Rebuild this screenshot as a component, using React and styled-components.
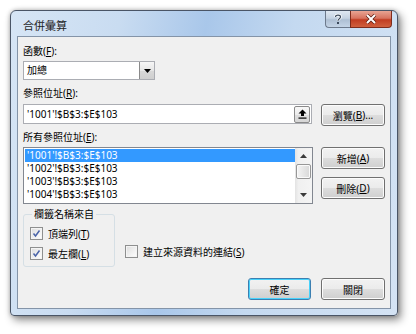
import styled, { createGlobalStyle, css } from "styled-components";

const GlobalStyle = createGlobalStyle`
  html, body {
    margin: 0;
    padding: 0;
    background: #ffffff;
  }
  body {
    font-family: "Noto Sans", "Noto Sans CJK TC", sans-serif;
    font-size: 10px;
    color: #000;
  }
`;

const Page = styled.div`
  padding: 10px 0 0 10px;
  width: 416px;
  height: 334px;
  box-sizing: border-box;
`;

const Window = styled.div`
  width: 388px;
  height: 306px;
  box-sizing: border-box;
  border: 1px solid #4a5566;
  border-radius: 6px 6px 4px 4px;
  background: linear-gradient(
    100deg,
    #d6e5f5 0%,
    #c9dcf1 25%,
    #a9c7ea 45%,
    #c4d9f0 65%,
    #d4e3f4 100%
  );
  box-shadow: 3px 4px 9px rgba(0, 0, 0, 0.45), 0 0 4px rgba(0, 0, 0, 0.25);
  display: flex;
  flex-direction: column;
  padding: 0 6px 6px 6px;
`;

const TitleBar = styled.div`
  height: 25px;
  display: flex;
  align-items: flex-start;
  justify-content: space-between;
`;

const Title = styled.div`
  font-family: "Noto Sans CJK TC", sans-serif;
  font-size: 11px;
  color: #1e1e1e;
  padding: 6px 0 0 6px;
`;

const Controls = styled.div`
  display: flex;
  margin-right: -1px;
`;

const CaptionButton = styled.div`
  height: 16px;
  display: flex;
  align-items: center;
  justify-content: center;
  border: 1px solid #6d7a8c;
  border-top: none;
  ${(p) =>
    p.$close
      ? css`
          width: 40px;
          border-radius: 0 0 4px 0;
          background: linear-gradient(#e8a493 0%, #d7735f 45%, #c13d22 55%, #d0603e 100%);
          border-color: #7e2c1c;
        `
      : css`
          width: 24px;
          border-right: none;
          border-radius: 0 0 0 4px;
          background: linear-gradient(#dfe8f2 0%, #c5d3e2 45%, #aebfd3 55%, #c4d4e6 100%);
        `}
`;

const Client = styled.div`
  flex: 1;
  background: #f0f0f0;
  border: 1px solid #8494a8;
  display: flex;
  flex-direction: column;
  padding: 0 5px;
  font-family: "Noto Sans", "Noto Sans CJK TC", sans-serif;
  font-size: 10px;
`;

const Label = styled.div`
  line-height: 16px;
  margin-top: ${(p) => p.$top}px;
  white-space: nowrap;
`;

const Key = styled.span`
  text-decoration: underline;
`;

const Combo = styled.div`
  margin-top: 2px;
  width: 132px;
  height: 19px;
  box-sizing: border-box;
  border: 1px solid #abadb3;
  background: #fff;
  display: flex;
  align-items: stretch;
`;

const ComboText = styled.div`
  flex: 1;
  padding-left: 3px;
  line-height: 17px;
`;

const DropButton = styled.div`
  width: 14px;
  border-left: 1px solid #8a8a8a;
  background: linear-gradient(#f6f6f6 0%, #e6e6e6 50%, #d8d8d8 51%, #cfcfcf 100%);
  display: flex;
  align-items: center;
  justify-content: center;
`;

const Row = styled.div`
  display: flex;
  align-items: flex-start;
  gap: ${(p) => p.$gap || 8}px;
  margin-top: ${(p) => p.$top || 0}px;
`;

const TextField = styled.div`
  width: 289px;
  height: 20px;
  box-sizing: border-box;
  border: 1px solid #abadb3;
  background: #fff;
  display: flex;
  align-items: center;
  justify-content: space-between;
  padding: 0 1px 0 3px;
`;

const Collapse = styled.div`
  width: 16px;
  height: 17px;
  box-sizing: border-box;
  border: 1px solid #8a8a8a;
  border-radius: 2px;
  background: linear-gradient(#f8f8f8 0%, #ececec 50%, #dedede 51%, #d6d6d6 100%);
  display: flex;
  align-items: center;
  justify-content: center;
`;

const Button = styled.div`
  width: ${(p) => p.$w || 64}px;
  height: 22px;
  box-sizing: border-box;
  border: 1px solid ${(p) => (p.$default ? "#3c7fb1" : "#707070")};
  border-radius: 3px;
  background: linear-gradient(#f2f2f2 0%, #ebebeb 50%, #dddddd 51%, #cfcfcf 100%);
  box-shadow: inset 0 0 0 1px ${(p) => (p.$default ? "#48d2fb" : "#fcfcfc")};
  display: flex;
  align-items: center;
  justify-content: center;
  white-space: nowrap;
`;

const ButtonColumn = styled.div`
  display: flex;
  flex-direction: column;
  gap: 8px;
`;

const List = styled.div`
  width: 290px;
  height: 57px;
  box-sizing: border-box;
  border: 1px solid #828790;
  background: #fff;
  display: flex;
  padding: 1px 0 1px 1px;
`;

const ListItems = styled.div`
  flex: 1;
  display: flex;
  flex-direction: column;
`;

const ListItem = styled.div`
  height: 13px;
  line-height: 13px;
  padding-left: 2px;
  ${(p) =>
    p.$selected &&
    css`
      background: #3399ff;
      color: #fff;
    `}
`;

const ScrollBar = styled.div`
  width: 17px;
  margin: -1px 0;
  background: linear-gradient(90deg, #e3e3e3 0%, #f0f0f0 20%, #f4f4f4 100%);
  display: flex;
  flex-direction: column;
  align-items: center;
`;

const Arrow = styled.div`
  height: 16px;
  width: 100%;
  display: flex;
  align-items: center;
  justify-content: center;
`;

const Track = styled.div`
  flex: 1;
`;

const Thumb = styled.div`
  width: 15px;
  height: 15px;
  box-sizing: border-box;
  border: 1px solid #979797;
  border-radius: 2px;
  background: linear-gradient(90deg, #f4f4f4 0%, #e6e6e6 50%, #d8d8d8 100%);
  box-shadow: inset 0 0 0 1px #fafafa;
`;

const Bottom = styled.div`
  display: flex;
  align-items: flex-start;
  margin-top: 4px;
`;

const Group = styled.fieldset`
  margin: 0;
  width: 92px;
  height: 59px;
  box-sizing: border-box;
  border: 1px solid #d5dfe5;
  border-radius: 3px;
  padding: 7px 0 0 6px;
  display: flex;
  flex-direction: column;
  gap: 7px;
`;

const Legend = styled.legend`
  padding: 0 2px;
  margin-left: 2px;
  line-height: 12px;
`;

const CheckRow = styled.label`
  display: flex;
  align-items: center;
  gap: 5px;
  height: 13px;
  white-space: nowrap;
  margin-top: ${(p) => p.$top || 0}px;
  margin-left: ${(p) => p.$left || 0}px;
`;

const Box = styled.span`
  width: 13px;
  height: 13px;
  box-sizing: border-box;
  border: 1px solid #8e8f8f;
  background: linear-gradient(135deg, #dcdcdc 0%, #f2f2f2 60%, #ffffff 100%);
  box-shadow: inset 0 0 0 1px #f4f4f4;
  display: flex;
  align-items: center;
  justify-content: center;
`;

const Footer = styled.div`
  display: flex;
  justify-content: flex-end;
  gap: 10px;
  margin-top: auto;
  margin-bottom: 8px;
`;

const Check = ({ checked, children, top, left }) => (
  <CheckRow $top={top} $left={left}>
    <Box>
      {checked && (
        <svg width="9" height="9" viewBox="0 0 9 9">
          <path d="M1.5 4.5 L3.5 7 L7.5 1.5" fill="none" stroke="#4a64a8" strokeWidth="1.5" />
        </svg>
      )}
    </Box>
    <span>{children}</span>
  </CheckRow>
);

const ref = "!$B$3:$E$103";

export default function App() {
  return (
    <Page>
      <GlobalStyle />
      <Window>
        <TitleBar>
          <Title>合併彙算</Title>
          <Controls>
            <CaptionButton>
              <svg width="10" height="12" viewBox="0 0 10 12">
                <path
                  d="M2.5 4 C2.5 1.5 7.5 1.5 7.5 4 C7.5 5.8 5 5.6 5 7.8"
                  fill="none"
                  stroke="#ffffff"
                  strokeWidth="2.6"
                />
                <path
                  d="M2.5 4 C2.5 1.5 7.5 1.5 7.5 4 C7.5 5.8 5 5.6 5 7.8"
                  fill="none"
                  stroke="#3b4a5c"
                  strokeWidth="1.2"
                />
                <rect x="4" y="9" width="2" height="2" fill="#3b4a5c" />
              </svg>
            </CaptionButton>
            <CaptionButton $close>
              <svg width="12" height="10" viewBox="0 0 12 10">
                <path d="M2 1 L10 9 M10 1 L2 9" stroke="#5a1c10" strokeWidth="3.4" />
                <path d="M2 1 L10 9 M10 1 L2 9" stroke="#ffffff" strokeWidth="2" />
              </svg>
            </CaptionButton>
          </Controls>
        </TitleBar>
        <Client>
          <Label $top={6}>
            函數(<Key>F</Key>):
          </Label>
          <Combo>
            <ComboText>加總</ComboText>
            <DropButton>
              <svg width="7" height="4" viewBox="0 0 7 4">
                <path d="M0 0 L7 0 L3.5 4 Z" fill="#000" />
              </svg>
            </DropButton>
          </Combo>
          <Label $top={5}>
            參照位址(<Key>R</Key>):
          </Label>
          <Row $top={3} $gap={9}>
            <TextField>
              <span>'1001'{ref}</span>
              <Collapse>
                <svg width="9" height="10" viewBox="0 0 9 10">
                  <path d="M4.5 0.5 L8.5 4.5 L6 4.5 L6 7 L3 7 L3 4.5 L0.5 4.5 Z" fill="#000" />
                  <rect x="0.5" y="8.5" width="8" height="1.2" fill="#000" />
                </svg>
              </Collapse>
            </TextField>
            <Button>
              瀏覽(<Key>B</Key>)...
            </Button>
          </Row>
          <Label $top={3}>
            所有參照位址(<Key>E</Key>):
          </Label>
          <Row $top={2} $gap={8}>
            <List>
              <ListItems>
                <ListItem $selected>'1001'{ref}</ListItem>
                <ListItem>'1002'{ref}</ListItem>
                <ListItem>'1003'{ref}</ListItem>
                <ListItem>'1004'{ref}</ListItem>
              </ListItems>
              <ScrollBar>
                <Arrow>
                  <svg width="7" height="4" viewBox="0 0 7 4">
                    <path d="M0 4 L7 4 L3.5 0 Z" fill="#3b3b3b" />
                  </svg>
                </Arrow>
                <Thumb />
                <Track />
                <Arrow>
                  <svg width="7" height="4" viewBox="0 0 7 4">
                    <path d="M0 0 L7 0 L3.5 4 Z" fill="#3b3b3b" />
                  </svg>
                </Arrow>
              </ScrollBar>
            </List>
            <ButtonColumn>
              <Button>
                新增(<Key>A</Key>)
              </Button>
              <Button>
                刪除(<Key>D</Key>)
              </Button>
            </ButtonColumn>
          </Row>
          <Bottom>
            <Group>
              <Legend>欄籤名稱來自</Legend>
              <Check checked>
                頂端列(<Key>T</Key>)
              </Check>
              <Check checked>
                最左欄(<Key>L</Key>)
              </Check>
            </Group>
            <Check top={37} left={10}>
              建立來源資料的連結(<Key>S</Key>)
            </Check>
          </Bottom>
          <Footer>
            <Button $w={63} $default>
              確定
            </Button>
            <Button>關閉</Button>
          </Footer>
        </Client>
      </Window>
    </Page>
  );
}
